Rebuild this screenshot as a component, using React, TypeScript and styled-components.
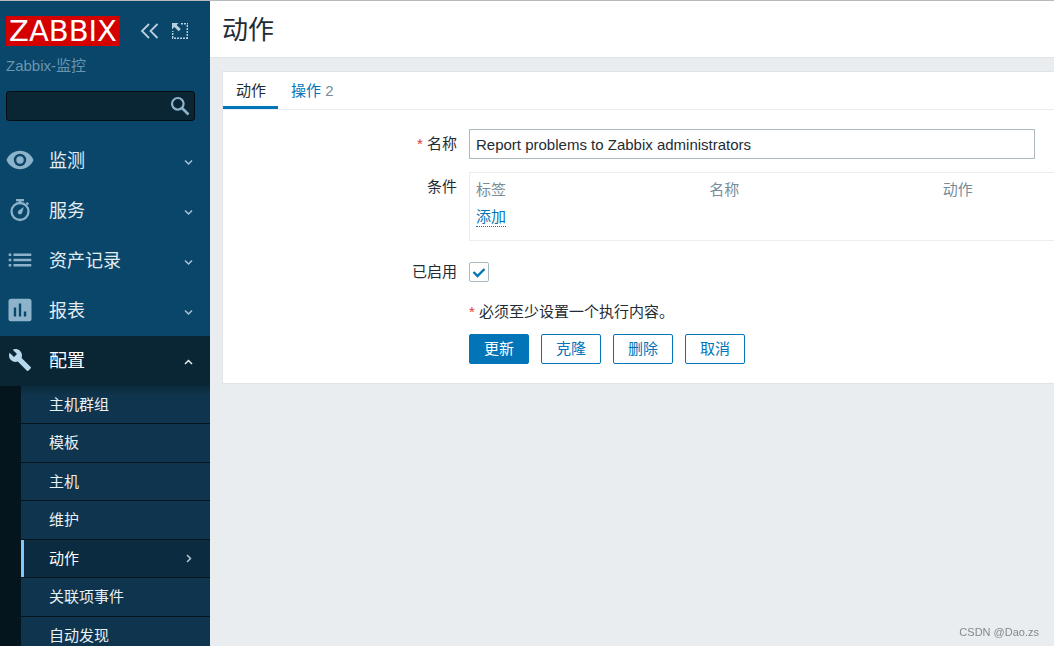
import React, { useState } from "react";
import styled, { createGlobalStyle, css } from "styled-components";

const GlobalStyle = createGlobalStyle`
  *, *::before, *::after { box-sizing: border-box; }
  body {
    margin: 0;
    background: #e9edf0;
    color: #1f2c33;
    font: 15px/20px "Liberation Sans", Arial, "Noto Sans CJK SC", sans-serif;
  }
  button, input { font: inherit; color: inherit; }
  a { color: inherit; text-decoration: none; }
  ul { list-style: none; margin: 0; padding: 0; }
`;

const Page = styled.div`
  display: flex;
  height: 100vh;
  overflow: hidden;
  border-top: 1px solid #b9babb;
`;

/* ---------- sidebar ---------- */

const Sidebar = styled.aside`
  flex: 0 0 210px;
  display: flex;
  flex-direction: column;
  padding-top: 15px;
  background: #0a466a;
  overflow: hidden;
`;

const Brand = styled.div`
  display: flex;
  align-items: center;
  padding: 0 6px;
`;

const Logo = styled.a`
  width: 114px;
  height: 30px;
  margin-right: 20px;
  background: #d40000;
  color: #fff;
  font: 29px/30px "DejaVu Sans", sans-serif;
  text-align: center;
  white-space: nowrap;
`;

const IconButton = styled.button`
  display: flex;
  align-items: center;
  justify-content: center;
  width: 20px;
  height: 20px;
  margin-right: 10px;
  padding: 0;
  border: 0;
  background: none;
  color: #b8cfdd;
  cursor: pointer;
`;

const ServerName = styled.div`
  margin: 10px 6px 15px;
  color: #6a95ae;
`;

const Search = styled.form`
  display: flex;
  align-items: center;
  height: 30px;
  flex: none;
  margin: 0 15px 15px 6px;
  border: 1px solid #030d13;
  border-radius: 3px;
  background: #0a2635;
`;

const SearchInput = styled.input`
  flex: 1;
  min-width: 0;
  height: 28px;
  padding: 0 6px;
  border: 0;
  outline: 0;
  background: none;
  color: #fff;
`;

const SearchButton = styled(IconButton)`
  margin-right: 4px;
  color: #8db3cb;
`;

const MenuLink = styled.a<{ $open?: boolean }>`
  display: flex;
  align-items: center;
  height: 50px;
  padding: 0 16px 2px 6px;
  color: ${(p) => (p.$open ? "#fff" : "#e3edf3")};
  font-size: 18px;
  background: ${(p) => (p.$open ? "#0a2635" : "none")};
  & > svg:first-child { color: ${(p) => (p.$open ? "#b8d8ec" : "#8db3cb")}; }
  & > svg:last-child { margin-top: 4px; color: ${(p) => (p.$open ? "#e3edf3" : "#a8c2d2")}; }
`;

const MenuText = styled.span`
  flex: 1;
  margin-left: 15px;
  padding-top: 2px;
`;

const Submenu = styled.ul`
  padding-left: 21px;
  background: #04151e;
  & > li { border-bottom: 1px solid #04151e; }
`;

const SubmenuItem = styled.li`
  height: 38px;
  &:nth-child(even) { height: 39px; }
  &:first-child a { background: linear-gradient(#0b2b3e, #0f344d 10px); }
`;

const SubmenuLink = styled.a<{ $current?: boolean }>`
  display: flex;
  align-items: center;
  justify-content: space-between;
  height: 100%;
  padding: 0 16px 0 28px;
  background: #0f344d;
  color: #e9f1f5;
  ${(p) =>
    p.$current &&
    css`
      padding-left: 25px;
      border-left: 3px solid #7fc8f8;
      background: #0b2c40;
      color: #fff;
    `}
  & > svg { color: #b5c6d0; }
`;

/* ---------- content ---------- */

const Main = styled.main`
  flex: 1;
  min-width: 0;
  overflow: hidden;
`;

const PageHeader = styled.header`
  height: 57px;
  padding: 0 12px;
  border-bottom: 1px solid #dfe4e7;
  background: #fff;
`;

const Title = styled.h1`
  margin: 0;
  font-size: 26px;
  font-weight: 400;
  line-height: 58px;
`;

const Card = styled.section`
  width: max-content;
  min-width: calc(100% - 24px);
  margin: 13px 12px;
  border: 1px solid #dfe4e7;
  background: #fff;
`;

const Tabs = styled.div`
  display: flex;
  border-bottom: 1px solid #ebeef0;
`;

const Tab = styled.button<{ $active: boolean }>`
  height: 37px;
  padding: 3px 12px 0 13px;
  border: 0;
  border-bottom: 3px solid ${(p) => (p.$active ? "#0275b8" : "transparent")};
  background: none;
  color: ${(p) => (p.$active ? "#1f2c33" : "#0275b8")};
  cursor: pointer;
`;

const Count = styled.span`
  color: #768d99;
`;

const Form = styled.form`
  display: grid;
  grid-template-columns: 234px auto;
  gap: 13px 12px;
  padding: 19px 12px 19px 0;
`;

const labelStyle = css`
  line-height: 30px;
  text-align: right;
`;

const Label = styled.label<{ $required?: boolean }>`
  ${labelStyle}
  ${(p) =>
    p.$required &&
    css`
      &::before { content: "* "; color: #e33734; }
    `}
`;

const GroupLabel = styled.span`
  ${labelStyle}
`;

const TextInput = styled.input`
  width: 566px;
  height: 30px;
  padding: 0 6px;
  border: 1px solid #acbbc2;
  background: #fff;
  outline: 0;
`;

const TableBox = styled.div`
  min-width: 702px;
  padding-bottom: 13px;
  border: 1px solid #ebeef0;
`;

const Table = styled.table`
  width: 700px;
  border-collapse: collapse;
  table-layout: fixed;
  th, td { padding: 7px 6px 0; text-align: left; font-weight: 400; }
  th { color: #768d99; }
`;

const LinkButton = styled.button`
  display: block;
  height: 20px;
  padding: 0;
  border: 0;
  border-bottom: 1px dotted #0275b8;
  background: none;
  color: #0275b8;
  cursor: pointer;
`;

const CheckLabel = styled(Label)`
  padding: 3px 0;
`;

const Checkbox = styled.input`
  appearance: none;
  align-self: center;
  width: 20px;
  height: 20px;
  margin: 0;
  border: 1px solid #acbbc2;
  border-radius: 2px;
  background: #fff;
  &:checked {
    background: #fff
      url("data:image/svg+xml,%3Csvg xmlns='http://www.w3.org/2000/svg' viewBox='0 0 18 18'%3E%3Cpath d='M3.5 9l4 4 7-7' fill='none' stroke='%230275b8' stroke-width='2.4'/%3E%3C/svg%3E")
      center / 18px;
  }
`;

const Note = styled.p`
  grid-column: 2;
  margin: 0;
  line-height: 18px;
  &::before { content: "* "; color: #e33734; }
`;

const Actions = styled.div`
  grid-column: 2;
  display: flex;
  gap: 12px;
`;

const Button = styled.button<{ $primary?: boolean }>`
  min-width: 60px;
  height: 30px;
  padding: 0 12px;
  border: 1px solid #0275b8;
  border-radius: 2px;
  background: ${(p) => (p.$primary ? "#0275b8" : "#fff")};
  color: ${(p) => (p.$primary ? "#fff" : "#0275b8")};
  cursor: pointer;
`;

const Watermark = styled.div`
  position: fixed;
  right: 15px;
  bottom: 4px;
  color: #85898c;
  font-size: 11px;
`;

/* ---------- icons ---------- */

const Glyph = ({ children }: { children: React.ReactNode }) => (
  <svg width="28" height="28" viewBox="0 0 28 28" fill="currentColor" aria-hidden="true">
    {children}
  </svg>
);

const EyeIcon = () => (
  <Glyph>
    <path
      fillRule="evenodd"
      d="M14 4.800C7.800 4.800 2.600 8.600.5 14c2.100 5.400 7.300 9.200 13.500 9.200S25.400 19.400 27.500 14C25.400 8.600 20.200 4.800 14 4.800zM14 20.200a6.200 6.200 0 1 1 0-12.400 6.200 6.200 0 0 1 0 12.400zM14 10.300a3.700 3.700 0 1 0 0 7.400 3.700 3.700 0 0 0 0-7.400z"
    />
  </Glyph>
);

const TimerIcon = () => (
  <Glyph>
    <circle cx="14" cy="15.500" r="8.500" fill="none" stroke="currentColor" strokeWidth="2.300" />
    <path d="M10 3h8v2.200h-2.600v2.300h-2.800V5.200H10zM19.600 7.400l1.500-1.500 1.900 1.900-1.500 1.500zM17.800 11l-1.700 6a2.200 2.200 0 1 1-3.300-2.600z" />
  </Glyph>
);

const ListIcon = () => (
  <Glyph>
    <path d="M2.700 7.400h2.600v2.600H2.700zM7.500 7.400h17.800v2.600H7.500zM2.700 12.700h2.600v2.600H2.700zM7.500 12.700h17.800v2.600H7.500zM2.700 18h2.600v2.600H2.700zM7.500 18h17.800v2.600H7.500z" />
  </Glyph>
);

const ChartIcon = () => (
  <Glyph>
    <path
      fillRule="evenodd"
      d="M5 2.700h18a2.500 2.500 0 0 1 2.500 2.500v17.600a2.500 2.500 0 0 1-2.500 2.500H5a2.500 2.500 0 0 1-2.500-2.500V5.200A2.500 2.500 0 0 1 5 2.700zM7.800 11.500v9h2.400v-9zM12.800 7.500v13h2.400v-13zM17.800 15.500v5h2.400v-5z"
    />
  </Glyph>
);

const WrenchIcon = () => (
  <Glyph>
    <path
      transform="translate(2 2)"
      d="M22.700 19l-9.100-9.100c.9-2.300.4-5-1.500-6.900-2-2-5-2.400-7.400-1.300L9 6 6 9 1.600 4.700C.4 7.100.9 10.100 2.900 12.100c1.900 1.900 4.600 2.400 6.900 1.500l9.100 9.100c.4.4 1 .4 1.400 0l2.300-2.300c.5-.4.5-1.100.1-1.400z"
    />
  </Glyph>
);

const arrows = {
  down: "M2 3.500l3.500 3.500L9 3.500",
  up: "M2 7l3.500-3.500L9 7",
  right: "M4 2l3.500 3.500L4 9",
};

const Arrow = ({ to }: { to: keyof typeof arrows }) => (
  <svg width="11" height="11" viewBox="0 0 11 11" fill="none" stroke="currentColor" strokeWidth="1.500" aria-hidden="true">
    <path d={arrows[to]} />
  </svg>
);

const CollapseIcon = () => (
  <svg width="20" height="20" viewBox="0 0 20 20" fill="none" stroke="currentColor" strokeWidth="1.800" aria-hidden="true">
    <path d="M9 3L2 10l7 7M17.500 3l-7 7 7 7" />
  </svg>
);

const KioskIcon = () => (
  <svg width="20" height="20" viewBox="0 0 20 20" fill="none" stroke="currentColor" aria-hidden="true">
    <path d="M11 2.700h7M17.300 4v14M18 17.300H2M2.700 17V10" strokeWidth="1.400" strokeDasharray="2 1" />
    <path d="M2 2h6.500L6.600 3.900l4.200 4.200-2.200 2.200-4.200-4.200L2 8.500z" fill="currentColor" stroke="none" />
  </svg>
);

const SearchIcon = () => (
  <svg width="20" height="20" viewBox="0 0 20 20" fill="none" stroke="currentColor" aria-hidden="true">
    <circle cx="7.800" cy="7.800" r="5.800" strokeWidth="2.200" />
    <path d="M12 12l6.500 6.500" strokeWidth="2.600" />
  </svg>
);

/* ---------- page ---------- */

const menu = [
  { text: "监测", Icon: EyeIcon },
  { text: "服务", Icon: TimerIcon },
  { text: "资产记录", Icon: ListIcon },
  { text: "报表", Icon: ChartIcon },
  {
    text: "配置",
    Icon: WrenchIcon,
    items: ["主机群组", "模板", "主机", "维护", "动作", "关联项事件", "自动发现"],
  },
];

const currentItem = "动作";

export default function App() {
  const [tab, setTab] = useState(0);
  const [name, setName] = useState("Report problems to Zabbix administrators");
  const [enabled, setEnabled] = useState(true);

  return (
    <>
      <GlobalStyle />
      <Page>
        <Sidebar>
          <Brand>
            <Logo href="#">ZABBIX</Logo>
            <IconButton type="button" aria-label="Collapse sidebar">
              <CollapseIcon />
            </IconButton>
            <IconButton type="button" aria-label="Kiosk mode">
              <KioskIcon />
            </IconButton>
          </Brand>
          <ServerName>Zabbix-监控</ServerName>
          <Search onSubmit={(e) => e.preventDefault()}>
            <SearchInput type="text" aria-label="Search" />
            <SearchButton type="submit" aria-label="Search">
              <SearchIcon />
            </SearchButton>
          </Search>
          <nav>
            <ul>
              {menu.map(({ text, Icon, items }) => (
                <li key={text}>
                  <MenuLink href="#" $open={!!items}>
                    <Icon />
                    <MenuText>{text}</MenuText>
                    <Arrow to={items ? "up" : "down"} />
                  </MenuLink>
                  {items && (
                    <Submenu>
                      {items.map((item) => (
                        <SubmenuItem key={item}>
                          <SubmenuLink href="#" $current={item === currentItem}>
                            {item}
                            {item === currentItem && <Arrow to="right" />}
                          </SubmenuLink>
                        </SubmenuItem>
                      ))}
                    </Submenu>
                  )}
                </li>
              ))}
            </ul>
          </nav>
        </Sidebar>

        <Main>
          <PageHeader>
            <Title>动作</Title>
          </PageHeader>
          <Card>
            <Tabs role="tablist">
              <Tab type="button" role="tab" aria-selected={tab === 0} $active={tab === 0} onClick={() => setTab(0)}>
                动作
              </Tab>
              <Tab type="button" role="tab" aria-selected={tab === 1} $active={tab === 1} onClick={() => setTab(1)}>
                操作 <Count>2</Count>
              </Tab>
            </Tabs>
            <Form onSubmit={(e) => e.preventDefault()}>
              <Label htmlFor="name" $required>
                名称
              </Label>
              <TextInput id="name" type="text" value={name} onChange={(e) => setName(e.target.value)} />

              <GroupLabel id="conditions">条件</GroupLabel>
              <TableBox>
                <Table aria-labelledby="conditions">
                  <thead>
                    <tr>
                      <th scope="col">标签</th>
                      <th scope="col">名称</th>
                      <th scope="col">动作</th>
                    </tr>
                  </thead>
                  <tbody>
                    <tr>
                      <td colSpan={3}>
                        <LinkButton type="button">添加</LinkButton>
                      </td>
                    </tr>
                  </tbody>
                </Table>
              </TableBox>

              <CheckLabel htmlFor="enabled">已启用</CheckLabel>
              <Checkbox id="enabled" type="checkbox" checked={enabled} onChange={(e) => setEnabled(e.target.checked)} />

              <Note>必须至少设置一个执行内容。</Note>

              <Actions>
                <Button type="submit" $primary>
                  更新
                </Button>
                <Button type="button">克隆</Button>
                <Button type="button">删除</Button>
                <Button type="button">取消</Button>
              </Actions>
            </Form>
          </Card>
        </Main>
      </Page>
      <Watermark>CSDN @Dao.zs</Watermark>
    </>
  );
}
